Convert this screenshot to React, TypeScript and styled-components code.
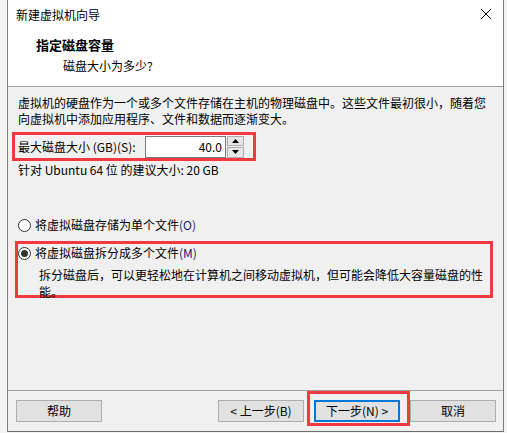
import React from "react";
import styled, { createGlobalStyle } from "styled-components";

const Global = createGlobalStyle`
  html, body { margin: 0; padding: 0; background: #f3f3f3; }
  body { font-family: "Noto Sans CJK SC", "Noto Sans", sans-serif; font-size: 12px; color: #000; }
  * { box-sizing: border-box; }
`;

const Page = styled.div`
  width: 507px;
  height: 433px;
  padding-left: 7px;
  display: flex;
  overflow: hidden;
`;

const Window = styled.div`
  width: 497px;
  height: 432px;
  border-left: 1px solid #7c7c7c;
  border-right: 1px solid #7c7c7c;
  border-bottom: 1px solid #6c6c6c;
  background: #f0f0f0;
  display: flex;
  flex-direction: column;
`;

const TitleBar = styled.div`
  height: 30px;
  background: #fff;
  display: flex;
  align-items: center;
  justify-content: space-between;
  padding: 0 9px 1px 8px;
  line-height: 16px;
`;

const Title = styled.span`
  font-size: 12px;
`;

const Close = styled.svg`
  width: 12px;
  height: 12px;
  margin-right: 2px;
  margin-top: -2px;
`;

const Header = styled.div`
  height: 57px;
  background: #fff;
  border-bottom: 1px solid #a0a0a0;
  padding: 6px 0 0 28px;
  display: flex;
  flex-direction: column;
`;

const HeadTitle = styled.div`
  font-weight: bold;
  font-size: 13px;
  line-height: 18px;
`;

const HeadSub = styled.div`
  padding-left: 27px;
  line-height: 18px;
  margin-top: 3px;
`;

const Body = styled.div`
  flex: 1;
  padding: 8px 10px 0 10px;
  display: flex;
  flex-direction: column;
`;

const Para = styled.div`
  line-height: 16px;
  white-space: nowrap;
`;

const Mark = styled.div<{ $w: number; $h: number; $ml: number; $mt: number }>`
  border: 3px solid #f03a3f;
  width: ${(p) => p.$w}px;
  height: ${(p) => p.$h}px;
  margin-left: ${(p) => p.$ml}px;
  margin-top: ${(p) => p.$mt}px;
`;

const SizeRow = styled.div`
  display: flex;
  align-items: center;
  height: 100%;
  padding-left: 3px;
`;

const SizeLabel = styled.span`
  width: 127px;
  line-height: 16px;
  white-space: nowrap;
`;

const Input = styled.div`
  width: 81px;
  height: 22px;
  background: #fff;
  border: 1px solid #7a7a7a;
  text-align: right;
  padding-right: 3px;
  line-height: 20px;
  font-size: 12px;
`;

const Spinner = styled.div`
  width: 17px;
  height: 22px;
  margin-left: 1px;
  display: flex;
  flex-direction: column;
  gap: 1px;
`;

const SpinBtn = styled.div`
  flex: 1;
  background: #e6e6e6;
  border: 1px solid #adadad;
  display: flex;
  align-items: center;
  justify-content: center;
`;

const Recommend = styled.div`
  line-height: 16px;
  margin-top: 1px;
`;

const RadioRow = styled.label<{ $mt: number }>`
  display: flex;
  align-items: center;
  gap: 4px;
  line-height: 16px;
  margin-top: ${(p) => p.$mt}px;
`;

const Radio = styled.span<{ $on?: boolean }>`
  width: 13px;
  height: 13px;
  border-radius: 50%;
  border: 1px solid #333;
  background: #fff;
  display: flex;
  align-items: center;
  justify-content: center;
  &::after {
    content: "";
    width: 7px;
    height: 7px;
    border-radius: 50%;
    background: ${(p) => (p.$on ? "#333" : "transparent")};
  }
`;

const Accel = styled.span`
  color: #1a1a6a;
`;

const SplitBox = styled.div`
  padding-top: 1px;
  display: flex;
  flex-direction: column;
`;

const Desc = styled.div`
  padding-left: 21px;
  margin-top: 5px;
  line-height: 17px;
  width: 470px;
`;

const Footer = styled.div`
  height: 41px;
  border-top: 1px solid #a0a0a0;
  display: flex;
  align-items: flex-start;
  padding: 9px 7px 0 8px;
`;

const Button = styled.div<{ $default?: boolean }>`
  width: 86px;
  height: 22px;
  background: #e1e1e1;
  border: ${(p) => (p.$default ? "2px solid #0078d7" : "1px solid #adadad")};
  display: flex;
  align-items: center;
  justify-content: center;
  line-height: 16px;
  white-space: nowrap;
`;

const Spacer = styled.div`
  flex: 1;
`;

const NextWrap = styled.div`
  position: relative;
  margin: 0 10px;
  &::after {
    content: "";
    position: absolute;
    left: -7px;
    right: -10px;
    top: -9px;
    bottom: -4px;
    border: 3px solid #f03a3f;
    pointer-events: none;
  }
`;

const Tri = ({ up }: { up?: boolean }) => (
  <svg width="7" height="4" viewBox="0 0 7 4">
    <polygon points={up ? "0,4 7,4 3.5,0" : "0,0 7,0 3.5,4"} fill="#000" />
  </svg>
);

export default function App() {
  return (
    <>
      <Global />
      <Page>
        <Window>
          <TitleBar>
            <Title>新建虚拟机向导</Title>
            <Close viewBox="0 0 12 12">
              <path d="M1 1 L11 11 M11 1 L1 11" stroke="#000" strokeWidth="1" />
            </Close>
          </TitleBar>
          <Header>
            <HeadTitle>指定磁盘容量</HeadTitle>
            <HeadSub>磁盘大小为多少?</HeadSub>
          </Header>
          <Body>
            <Para>虚拟机的硬盘作为一个或多个文件存储在主机的物理磁盘中。这些文件最初很小，随着您</Para>
            <Para>向虚拟机中添加应用程序、文件和数据而逐渐变大。</Para>
            <Mark $w={244} $h={29} $ml={-6} $mt={5}>
              <SizeRow>
                <SizeLabel>最大磁盘大小 (GB)(S):</SizeLabel>
                <Input>40.0</Input>
                <Spinner>
                  <SpinBtn>
                    <Tri up />
                  </SpinBtn>
                  <SpinBtn>
                    <Tri />
                  </SpinBtn>
                </Spinner>
              </SizeRow>
            </Mark>
            <Recommend>针对 Ubuntu 64 位 的建议大小: 20 GB</Recommend>
            <RadioRow $mt={39}>
              <Radio />
              <span>
                将虚拟磁盘存储为单个文件<Accel>(O)</Accel>
              </span>
            </RadioRow>
            <Mark $w={478} $h={57} $ml={-3} $mt={8}>
              <SplitBox>
                <RadioRow $mt={0}>
                  <Radio $on />
                  <span>
                    将虚拟磁盘拆分成多个文件<Accel>(M)</Accel>
                  </span>
                </RadioRow>
                <Desc>拆分磁盘后，可以更轻松地在计算机之间移动虚拟机，但可能会降低大容量磁盘的性能。</Desc>
              </SplitBox>
            </Mark>
          </Body>
          <Footer>
            <Button>帮助</Button>
            <Spacer />
            <Button>&lt; 上一步(B)</Button>
            <NextWrap>
              <Button $default>下一步(N) &gt;</Button>
            </NextWrap>
            <Button>取消</Button>
          </Footer>
        </Window>
      </Page>
    </>
  );
}
